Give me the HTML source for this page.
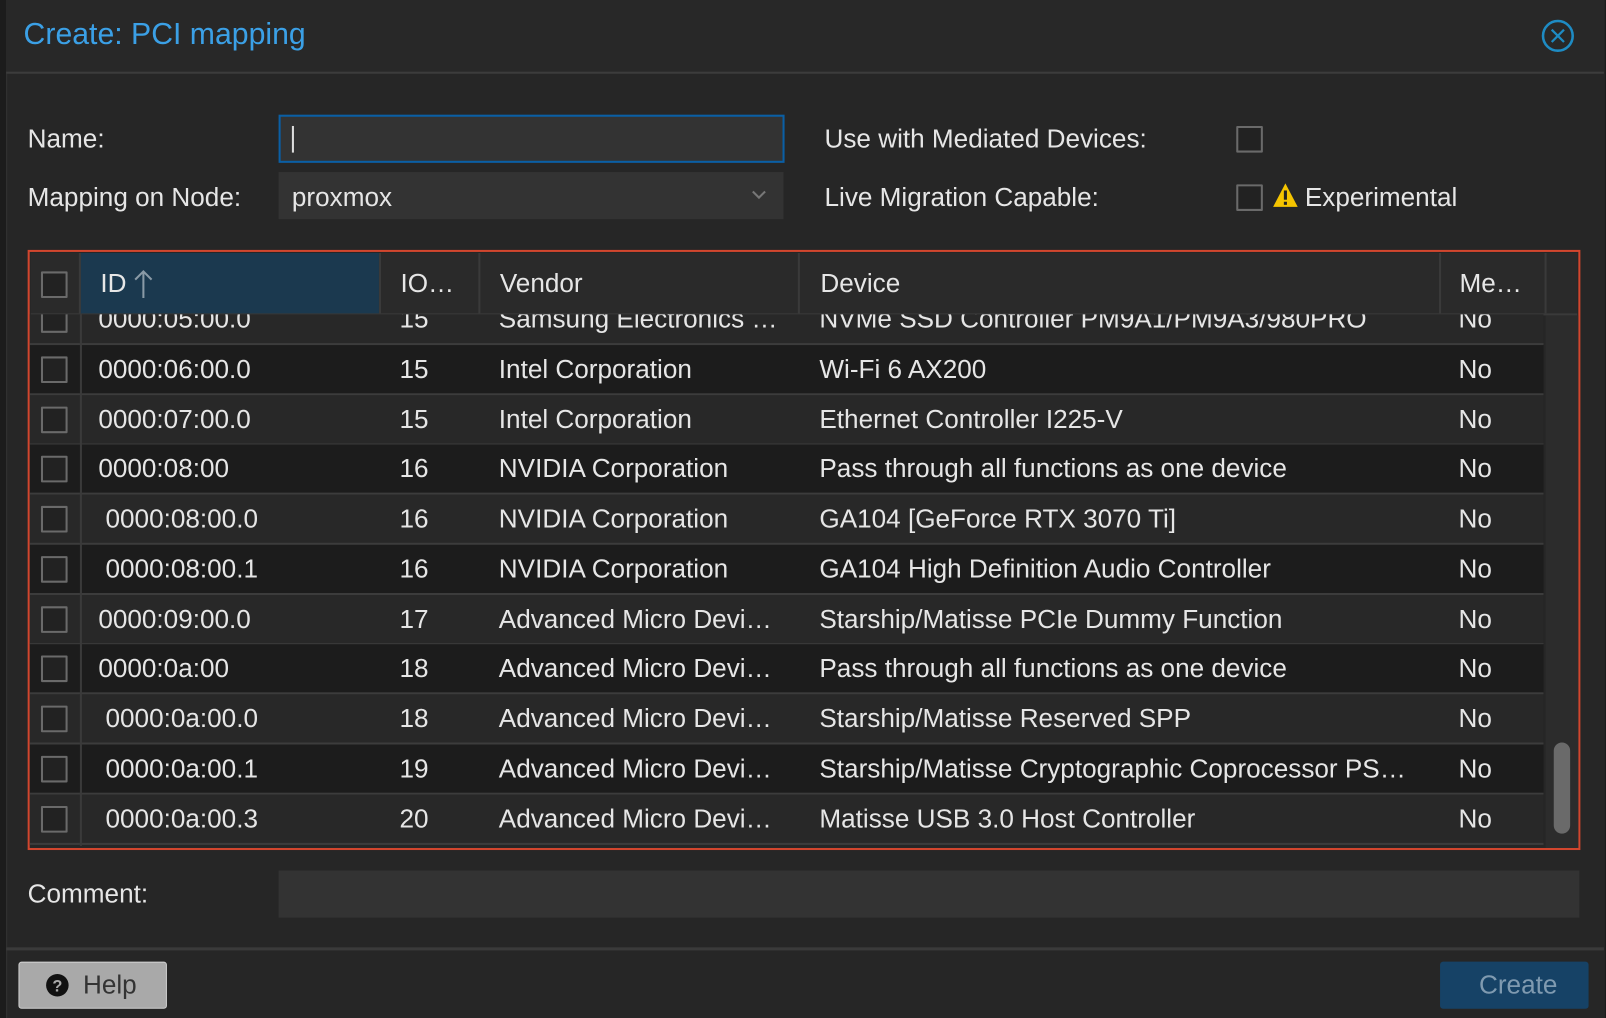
<!DOCTYPE html>
<html><head><meta charset="utf-8"><style>
html,body{margin:0;padding:0;background:#1c1c1c;width:1606px;height:1018px;overflow:hidden}
#s{position:absolute;left:0;top:0;width:1568px;height:994px;transform:scale(1.02423,1.02414);transform-origin:0 0;font-family:"Liberation Sans",sans-serif;color:#e6e6e6;font-size:25.5px}
.a{position:absolute}
.win{left:6px;top:0;width:1560px;height:994px;background:#262626;border-left:1px solid #333}
.cb{position:absolute;width:22px;height:22px;border:2px solid #6a6a6a;background:#222;border-radius:1px}
.t{position:absolute;white-space:nowrap;line-height:28px}
.row{position:absolute;left:0;width:1478px;height:47px;border-bottom:2px solid #3c3c3c;overflow:hidden}
.row .t{top:10px}
.row .cb{left:11px;top:11px}
.d{background:#1c1c1c}.l{background:#282828}
.c1{left:67px}.c1i{left:74px}.c2{left:361px}.c3{left:458px}.c4{left:771px}.c5{left:1395px}
.vl{position:absolute;top:0;bottom:0;width:2px;background:#3a3a3a}
</style></head><body><div id="s">
<div class="a win"></div>
<div class="a" style="left:6px;top:0;width:1560px;height:70px;background:#282828"></div>
<div class="t" style="left:23px;top:20px;font-size:29.5px;color:#3ba0e6">Create: PCI mapping</div>
<svg class="a" style="left:1504px;top:18px" width="34" height="34" viewBox="0 0 34 34"><circle cx="17" cy="17" r="14.5" fill="none" stroke="#1e8bc3" stroke-width="2.5"/><path d="M11 11L23 23M23 11L11 23" stroke="#1e8bc3" stroke-width="2.2"/></svg>
<div class="a" style="left:6px;top:70px;width:1560px;height:2px;background:#3c3c3c"></div>

<div class="t" style="left:27px;top:122px">Name:</div>
<div class="a" style="left:272px;top:112px;width:490px;height:43px;background:#333;border:2px solid #0a5fa5"></div>
<div class="a" style="left:285px;top:123px;width:2px;height:26px;background:#ddd"></div>
<div class="t" style="left:27px;top:179px">Mapping on Node:</div>
<div class="a" style="left:272px;top:168px;width:493px;height:46px;background:#333"></div>
<div class="t" style="left:285px;top:179px">proxmox</div>
<svg class="a" style="left:733px;top:184px" width="16" height="12"><path d="M2 3L8 9L14 3" fill="none" stroke="#777" stroke-width="2"/></svg>

<div class="t" style="left:805px;top:122px">Use with Mediated Devices:</div>
<div class="cb" style="left:1207px;top:123px"></div>
<div class="t" style="left:805px;top:179px">Live Migration Capable:</div>
<div class="cb" style="left:1207px;top:180px"></div>
<svg class="a" style="left:1242px;top:178px" width="26" height="26" viewBox="0 0 26 26"><path d="M13 1L25 24H1Z" fill="#f5c400"/><rect x="11.5" y="8" width="3" height="9" fill="#222"/><rect x="11.5" y="19" width="3" height="3" fill="#222"/></svg>
<div class="t" style="left:1274px;top:179px">Experimental</div>

<div class="a" style="left:27px;top:244px;width:1512px;height:582px;border:2px solid #d2462e;background:#262626;overflow:hidden">
 <div class="a" style="left:1px;top:1px;width:1510px;height:59px;background:#2a2a2a;border-bottom:2px solid #3a3a3a"></div>
 <div class="a" style="left:49px;top:1px;width:292px;height:59px;background:#1b394f"></div>
 <div class="vl" style="left:48px;top:1px;height:59px"></div>
 <div class="vl" style="left:341px;top:1px;height:59px"></div>
 <div class="vl" style="left:438px;top:1px;height:59px"></div>
 <div class="vl" style="left:750px;top:1px;height:59px"></div>
 <div class="vl" style="left:1376px;top:1px;height:59px"></div>
 <div class="vl" style="left:1479px;top:1px;height:59px"></div>
 <div class="cb" style="left:11px;top:19px"></div>
 <div class="t" style="left:69px;top:17px">ID</div>
 <svg class="a" style="left:100px;top:16px" width="22" height="30"><path d="M11 29V3M3 11L11 3L19 11" fill="none" stroke="#8a9aa6" stroke-width="2"/></svg>
 <div class="t" style="left:362px;top:17px">IO…</div>
 <div class="t" style="left:459px;top:17px">Vendor</div>
 <div class="t" style="left:772px;top:17px">Device</div>
 <div class="t" style="left:1396px;top:17px">Me…</div>
 <div class="a" style="left:1480px;top:62px;width:32px;height:520px;background:#2c2c2c"></div>
</div>
<div class="a" style="left:29px;top:307px;width:1480px;height:519px;overflow:hidden">
<div class="row l" style="top:-19px"><div class="cb"></div><div class="t c1">0000:05:00.0</div><div class="t c2">15</div><div class="t c3">Samsung Electronics …</div><div class="t c4">NVMe SSD Controller PM9A1/PM9A3/980PRO</div><div class="t c5">No</div></div>
<div class="row d" style="top:30px"><div class="cb"></div><div class="t c1">0000:06:00.0</div><div class="t c2">15</div><div class="t c3">Intel Corporation</div><div class="t c4">Wi-Fi 6 AX200</div><div class="t c5">No</div></div>
<div class="row l" style="top:79px"><div class="cb"></div><div class="t c1">0000:07:00.0</div><div class="t c2">15</div><div class="t c3">Intel Corporation</div><div class="t c4">Ethernet Controller I225-V</div><div class="t c5">No</div></div>
<div class="row d" style="top:127px"><div class="cb"></div><div class="t c1">0000:08:00</div><div class="t c2">16</div><div class="t c3">NVIDIA Corporation</div><div class="t c4">Pass through all functions as one device</div><div class="t c5">No</div></div>
<div class="row l" style="top:176px"><div class="cb"></div><div class="t c1i">0000:08:00.0</div><div class="t c2">16</div><div class="t c3">NVIDIA Corporation</div><div class="t c4">GA104 [GeForce RTX 3070 Ti]</div><div class="t c5">No</div></div>
<div class="row d" style="top:225px"><div class="cb"></div><div class="t c1i">0000:08:00.1</div><div class="t c2">16</div><div class="t c3">NVIDIA Corporation</div><div class="t c4">GA104 High Definition Audio Controller</div><div class="t c5">No</div></div>
<div class="row l" style="top:274px"><div class="cb"></div><div class="t c1">0000:09:00.0</div><div class="t c2">17</div><div class="t c3">Advanced Micro Devi…</div><div class="t c4">Starship/Matisse PCIe Dummy Function</div><div class="t c5">No</div></div>
<div class="row d" style="top:322px"><div class="cb"></div><div class="t c1">0000:0a:00</div><div class="t c2">18</div><div class="t c3">Advanced Micro Devi…</div><div class="t c4">Pass through all functions as one device</div><div class="t c5">No</div></div>
<div class="row l" style="top:371px"><div class="cb"></div><div class="t c1i">0000:0a:00.0</div><div class="t c2">18</div><div class="t c3">Advanced Micro Devi…</div><div class="t c4">Starship/Matisse Reserved SPP</div><div class="t c5">No</div></div>
<div class="row d" style="top:420px"><div class="cb"></div><div class="t c1i">0000:0a:00.1</div><div class="t c2">19</div><div class="t c3">Advanced Micro Devi…</div><div class="t c4">Starship/Matisse Cryptographic Coprocessor PS…</div><div class="t c5">No</div></div>
<div class="row l" style="top:469px"><div class="cb"></div><div class="t c1i">0000:0a:00.3</div><div class="t c2">20</div><div class="t c3">Advanced Micro Devi…</div><div class="t c4">Matisse USB 3.0 Host Controller</div><div class="t c5">No</div></div>
</div>
<div class="a" style="left:78px;top:307px;width:2px;height:519px;background:#3a3a3a"></div>
<div class="a" style="left:1517px;top:725px;width:16px;height:89px;background:#6a6a6a;border-radius:8px"></div>

<div class="t" style="left:27px;top:859px">Comment:</div>
<div class="a" style="left:272px;top:850px;width:1270px;height:46px;background:#333"></div>
<div class="a" style="left:6px;top:925px;width:1560px;height:3px;background:#3a3a3a"></div>
<div class="a" style="left:18px;top:939px;width:143px;height:44px;background:#a9a9a9;border:1px solid #cfcfcf;border-radius:3px"></div>
<svg class="a" style="left:44px;top:950px" width="24" height="24"><circle cx="12" cy="12" r="11" fill="#111"/><text x="12" y="18" font-family="Liberation Sans" font-weight="bold" font-size="16" fill="#a9a9a9" text-anchor="middle">?</text></svg>
<div class="t" style="left:81px;top:948px;color:#333">Help</div>
<div class="a" style="left:1406px;top:939px;width:145px;height:46px;background:#164266;border-radius:3px"></div>
<div class="t" style="left:1444px;top:948px;color:#7f9ab0">Create</div>
</div>
</body></html>
